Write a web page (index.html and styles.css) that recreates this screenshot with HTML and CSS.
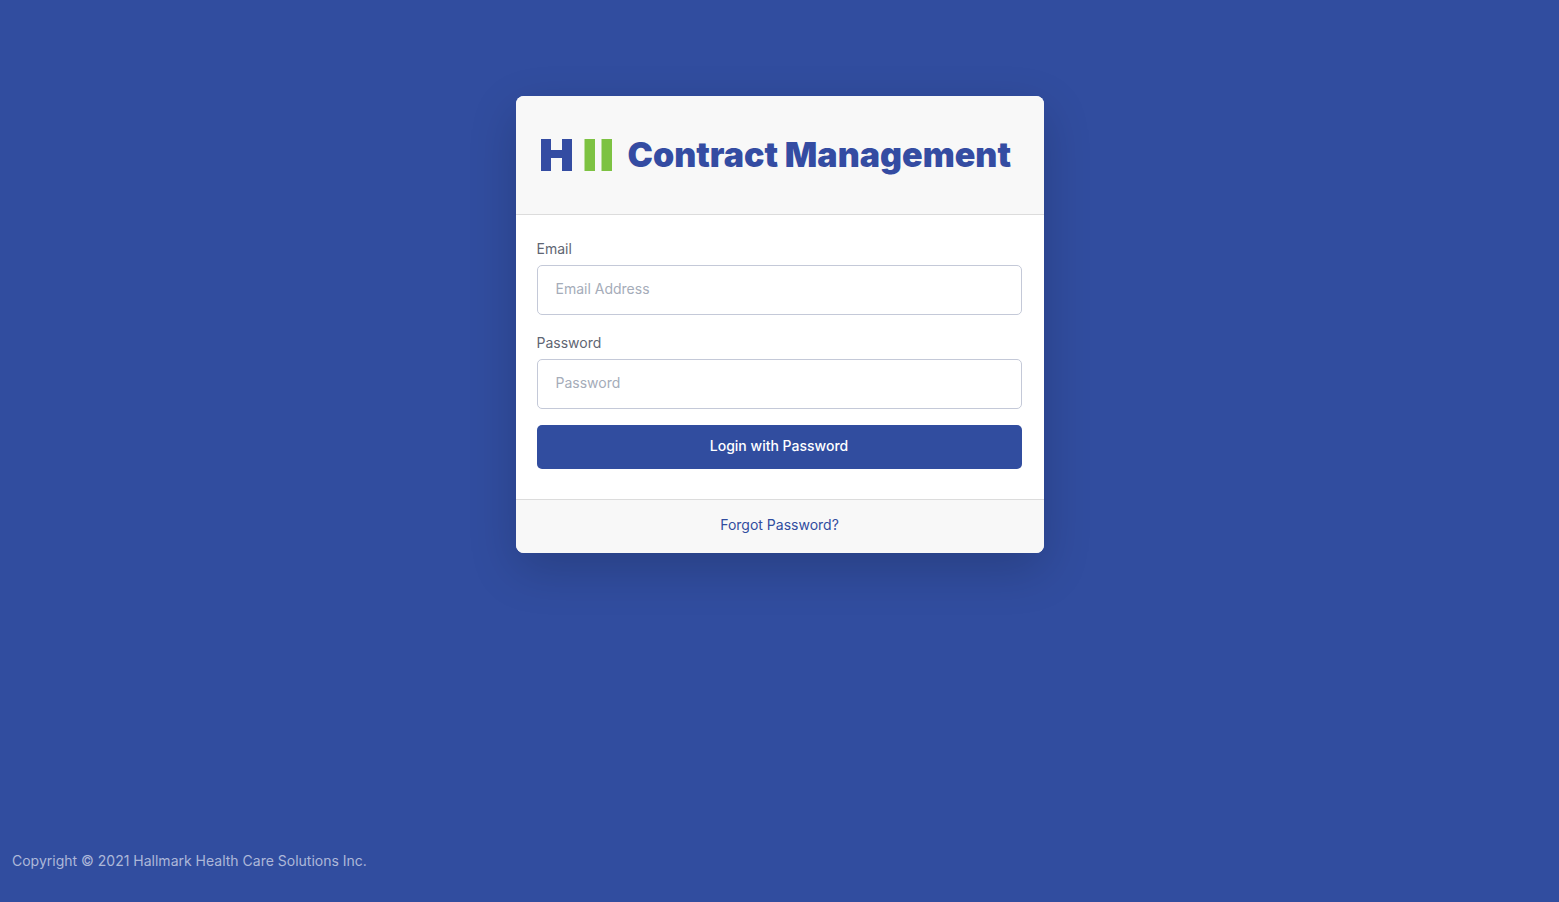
FILE: index.html
```html
<!DOCTYPE html>
<html lang="en">
<head>
<meta charset="utf-8">
<meta name="viewport" content="width=device-width, initial-scale=1">
<title>Contract Management</title>
<link rel="stylesheet" href="styles.css">
</head>
<body>
<main class="page">
  <form class="card">
    <header class="card-header">
      <svg class="logo" viewBox="0 0 72 32" aria-hidden="true">
        <path fill="#344ca2" d="M0 0h10v11h11V0h10v32H21V19H10v13H0z"/>
        <path fill="#7dc242" d="M43.500 0H54v32H43.500zM60.500 0H71v32H60.500z"/>
      </svg>
      <h1 class="title">Contract Management</h1>
    </header>
    <div class="card-body">
      <div class="fields">
        <div class="field">
          <label class="label" for="email">Email</label>
          <input class="input" id="email" type="email" placeholder="Email Address">
        </div>
        <div class="field">
          <label class="label" for="password">Password</label>
          <input class="input" id="password" type="password" placeholder="Password">
        </div>
      </div>
      <button class="button" type="submit">Login with Password</button>
    </div>
    <footer class="card-footer"><a class="link" href="#">Forgot Password?</a></footer>
  </form>
</main>
<footer class="copyright">Copyright © 2021 Hallmark Health Care Solutions Inc.</footer>
</body>
</html>
```

FILE: styles.css
```css
*, *::before, *::after { box-sizing: border-box; }

body {
  margin: 0;
  min-height: 100vh;
  display: flex;
  flex-direction: column;
  background: #314d9f;
  color: #5f6673;
  font: 14px/20px Inter, "Liberation Sans", sans-serif;
}

.page {
  flex: 1;
  display: flex;
  justify-content: center;
  align-items: flex-start;
  padding: 96px 16px 32px;
}

.card {
  width: 100%;
  max-width: 528px;
  overflow: hidden;
  border-radius: 8px;
  background: #fff;
  box-shadow: 0 16px 48px rgba(0, 0, 0, 0.176);
}

.card-header {
  display: flex;
  align-items: center;
  gap: 15px;
  padding: 40px 25px;
  background: #f8f8f8;
  border-bottom: 1px solid #dcdcdc;
}

.logo { flex: none; width: 72px; height: 32px; }

.title {
  margin: 0;
  color: #344ca2;
  font-size: 34px;
  font-weight: 900;
  line-height: 38px;
  white-space: nowrap;
}

.card-body {
  display: flex;
  flex-direction: column;
  gap: 16px;
  padding: 24px 22px 30px 21px;
}

.fields { display: flex; flex-direction: column; gap: 18px; }

.field { display: flex; flex-direction: column; gap: 6px; }

.input {
  width: 100%;
  height: 50px;
  padding: 0 18px 3px;
  border: 1px solid #c4c9d8;
  border-radius: 5px;
  background: #fff;
  color: #5f6673;
  font: inherit;
}

.input::placeholder { color: #a5acb9; opacity: 1; }

.button {
  height: 44px;
  padding: 0 18px 2px;
  border: 0;
  border-radius: 5px;
  background: #314d9f;
  color: #fff;
  font: inherit;
  font-weight: 500;
  cursor: pointer;
}

.card-footer {
  padding: 15px 22px 18px;
  background: #f8f8f8;
  border-top: 1px solid #dcdcdc;
  text-align: center;
}

.link { color: #314d9f; text-decoration: none; }

.copyright {
  padding: 0 12px 31px;
  color: #adb8d9;
}
```
